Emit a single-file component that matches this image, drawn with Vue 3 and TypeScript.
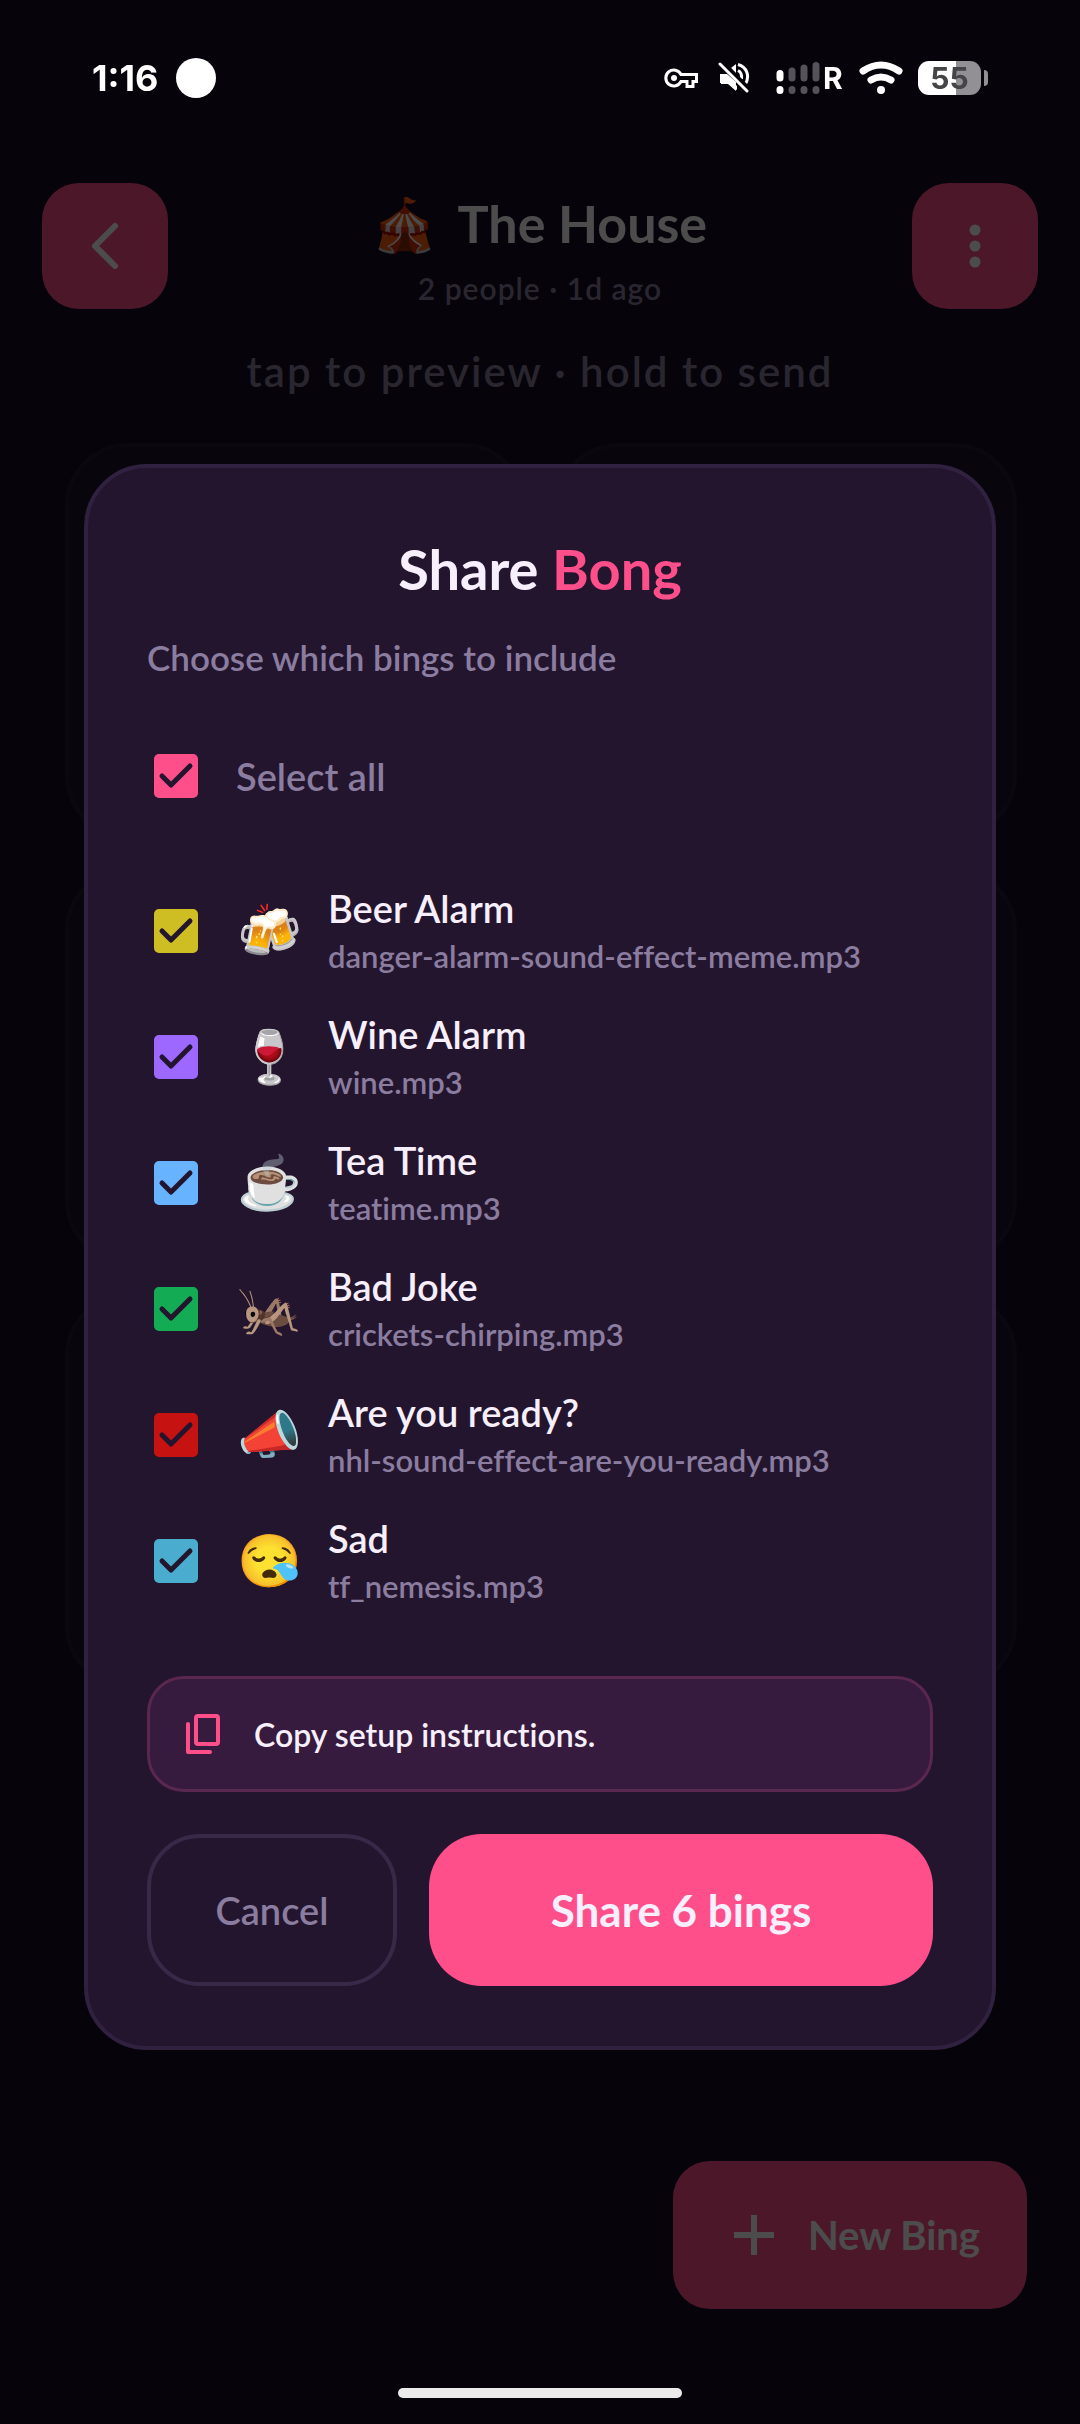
<script setup lang="ts">
import { computed, ref } from 'vue'

interface Bing {
  id: string
  emoji: string
  name: string
  file: string
  color: string
  selected: boolean
}

const bings = ref<Bing[]>([
  { id: 'beer', emoji: '🍻', name: 'Beer Alarm', file: 'danger-alarm-sound-effect-meme.mp3', color: '#cfbe23', selected: true },
  { id: 'wine', emoji: '🍷', name: 'Wine Alarm', file: 'wine.mp3', color: '#9d68ff', selected: true },
  { id: 'tea', emoji: '☕', name: 'Tea Time', file: 'teatime.mp3', color: '#68b3ff', selected: true },
  { id: 'joke', emoji: '🦗', name: 'Bad Joke', file: 'crickets-chirping.mp3', color: '#13ac54', selected: true },
  { id: 'ready', emoji: '📣', name: 'Are you ready?', file: 'nhl-sound-effect-are-you-ready.mp3', color: '#c71212', selected: true },
  { id: 'sad', emoji: '😪', name: 'Sad', file: 'tf_nemesis.mp3', color: '#4aadd0', selected: true },
])

const selectedCount = computed(() => bings.value.filter((b) => b.selected).length)
const allSelected = computed({
  get: () => selectedCount.value === bings.value.length,
  set: (value: boolean) => bings.value.forEach((b) => (b.selected = value)),
})
</script>

<template>
  <div class="screen">
    <div class="status">
      <span class="time">1:16</span>
      <span class="dot"></span>
      <div class="indicators">
        <svg class="key" width="34" height="22" viewBox="0 0 34 22" fill="none" stroke="#fff" stroke-width="3">
          <path d="M17 7.5A8 8 0 1 0 17 14.500H23V19.500H29V14.500H32.500V7.500Z" stroke-linejoin="miter" />
          <circle cx="10" cy="11" r="3" fill="#fff" stroke="none" />
        </svg>
        <svg class="mute" width="32" height="32" viewBox="0 0 32 32" fill="none">
          <path d="M2 12H7L19 24V28L9 21H2Z" fill="#fff" />
          <path d="M3 12H9L18 20V29L10 22H3Z" fill="#fff" />
          <path d="M13 6L18 2V12Z" fill="#fff" />
          <path d="M20 8.500C23 10 24 13 23.500 17" stroke="#fff" stroke-width="3" />
          <path d="M20 2.500C29 5 32 14 27.500 22" stroke="#fff" stroke-width="3" />
          <path d="M5 0L33 28" stroke="#07030b" stroke-width="3" />
          <path d="M2 2L29 29" stroke="#fff" stroke-width="3" stroke-linecap="round" />
        </svg>
        <svg class="signal" width="44" height="34" viewBox="0 0 44 34" fill="none" stroke-width="7" stroke-linecap="round">
          <path d="M4 12.500V17M4 28.500V29.500" stroke="#fff" />
          <path d="M16 10V17M16 28.500V29.500M28 7V17M28 28.500V29.500M40 4.500V17M40 28.500V29.500" stroke="#55525a" />
        </svg>
        <span class="roaming">R</span>
        <svg class="wifi" width="44" height="34" viewBox="0 0 44 34" fill="none" stroke="#fff" stroke-width="7" stroke-linecap="round">
          <path d="M4 10Q22 -2 40 10" />
          <path d="M12 19Q22 13 32 19" />
          <circle cx="22" cy="29" r="4" fill="#fff" stroke="none" />
        </svg>
        <span class="battery">55</span>
        <span class="battery-tip"></span>
      </div>
    </div>

    <header class="header">
      <button class="square" type="button" aria-label="Back">
        <svg width="36" height="52" viewBox="0 0 36 52" fill="none" stroke="#fff" stroke-width="6" stroke-linecap="round" stroke-linejoin="round">
          <path d="M28 6L8 26L28 46" />
        </svg>
      </button>
      <div class="heading">
        <h1><span class="tent">🎪</span>The House</h1>
        <p>2 people · 1d ago</p>
      </div>
      <button class="square" type="button" aria-label="More options">
        <svg width="12" height="44" viewBox="0 0 12 44" fill="#fff">
          <circle cx="6" cy="6" r="5.500" /><circle cx="6" cy="22" r="5.500" /><circle cx="6" cy="38" r="5.500" />
        </svg>
      </button>
    </header>
    <p class="hint">tap to preview · hold to send</p>
    <div class="tiles">
      <div v-for="bing in bings" :key="bing.id" class="tile"></div>
    </div>
    <button class="fab" type="button">
      <svg width="40" height="40" viewBox="0 0 40 40" stroke="#fff" stroke-width="6"><path d="M20 0V40M0 20H40" /></svg>
      <span>New Bing</span>
    </button>

    <div class="scrim">
      <section class="dialog" role="dialog" aria-labelledby="dialog-title">
        <h2 id="dialog-title">Share <em>Bong</em></h2>
        <p class="lead">Choose which bings to include</p>
        <label class="row all">
          <input v-model="allSelected" type="checkbox" />
          <span>Select all</span>
        </label>
        <ul>
          <li v-for="bing in bings" :key="bing.id">
            <label class="row">
              <input v-model="bing.selected" type="checkbox" :style="{ color: bing.color }" />
              <span class="emoji">{{ bing.emoji }}</span>
              <span class="labels">
                <span class="name">{{ bing.name }}</span>
                <span class="file">{{ bing.file }}</span>
              </span>
            </label>
          </li>
        </ul>
        <button class="copy" type="button">
          <svg width="36" height="40" viewBox="0 0 36 40" fill="none" stroke="#ff4f8b" stroke-width="4" stroke-linejoin="round" stroke-linecap="round">
            <rect x="11" y="2" width="22" height="28" rx="2" />
            <path d="M3 10V38H25" />
          </svg>
          <span>Copy setup instructions.</span>
        </button>
        <div class="actions">
          <button class="cancel" type="button">Cancel</button>
          <button class="share" type="button">Share {{ selectedCount }} bings</button>
        </div>
      </section>
    </div>
    <div class="home-bar"></div>
  </div>
</template>

<style>
body {
  margin: 0;
  background: #170b23;
}
</style>

<style scoped>
.screen {
  min-height: 100vh;
  color: #fff;
  font-family: Lato, "Noto Color Emoji", sans-serif;
  font-weight: 600;
  font-variant-ligatures: no-common-ligatures;
}
* {
  box-sizing: border-box;
}
h1,
h2,
p,
ul {
  margin: 0;
  padding: 0;
}
button {
  padding: 0;
  border: 0;
  color: inherit;
  font: inherit;
}

.status {
  position: relative;
  z-index: 2;
  display: flex;
  align-items: center;
  height: 156px;
  padding: 0 92px;
}
.time {
  font: 700 36px/40px Inter, sans-serif;
}
.dot {
  width: 40px;
  height: 40px;
  margin-left: 18px;
  border-radius: 50%;
  background: #fff;
}
.indicators {
  display: flex;
  align-items: center;
  margin-left: auto;
}
.mute {
  margin-left: 20px;
}
.signal {
  margin-left: 26px;
}
.roaming {
  width: 20px;
  margin-left: 3px;
  font: 700 30px/34px Inter, sans-serif;
}
.wifi {
  margin-left: 16px;
}
.battery {
  width: 63px;
  height: 34px;
  margin-left: 15px;
  border-radius: 11px;
  background: linear-gradient(90deg, #fff 60%, #929095 60%);
  color: #454446;
  font: 700 30px/34px Inter, sans-serif;
  text-align: center;
}
.battery-tip {
  width: 4px;
  height: 16px;
  margin-left: 3px;
  border-radius: 0 4px 4px 0;
  background: #929095;
}

.header {
  display: flex;
  align-items: flex-start;
  justify-content: space-between;
  padding: 27px 42px 0;
}
.square {
  display: flex;
  align-items: center;
  justify-content: center;
  width: 126px;
  height: 126px;
  border-radius: 37px;
  background: #ff4f8b;
}
.heading {
  text-align: center;
}
h1 {
  display: flex;
  align-items: center;
  justify-content: center;
  gap: 20px;
  font-size: 52px;
  font-weight: 700;
  line-height: 80px;
}
.tent {
  font-size: 52px;
  line-height: 76px;
}
.heading p {
  color: #8b7fa2;
  font-size: 30px;
  line-height: 50px;
  letter-spacing: 1px;
}
.hint {
  margin-top: 28px;
  color: #8b7fa2;
  font-size: 42px;
  line-height: 60px;
  letter-spacing: 2px;
  text-align: center;
}
.tiles {
  display: grid;
  grid-template-columns: 1fr 1fr;
  grid-auto-rows: 395px;
  gap: 30px;
  padding: 42px 63px 0 65px;
}
.tile {
  border: 4px solid #241a30;
  border-radius: 63px;
  background: #1c1228;
}
.fab {
  position: fixed;
  right: 53px;
  bottom: 115px;
  display: flex;
  align-items: center;
  gap: 34px;
  height: 148px;
  padding: 0 47px 0 61px;
  border-radius: 37px;
  background: #ff4f8b;
  font-size: 40px;
  font-weight: 700;
}

.scrim {
  position: fixed;
  inset: 0;
  z-index: 1;
  display: flex;
  align-items: center;
  padding: 152px 84px 62px;
  background: rgba(0, 0, 0, 0.7);
}
.dialog {
  flex: 1;
  padding: 60px 59px;
  border: 4px solid #2f213f;
  border-radius: 63px;
  background: #24152f;
}
h2 {
  color: #f7effc;
  font-size: 56px;
  font-weight: 700;
  line-height: 82px;
  text-align: center;
}
em {
  color: #ff4f8b;
  font-style: normal;
}
.lead {
  margin-top: 24px;
  color: #8b7d9f;
  font-size: 35px;
  line-height: 46px;
}
.row {
  display: flex;
  align-items: center;
  height: 126px;
  padding-left: 7px;
}
.all {
  margin: 33px 0 29px;
  color: #8b7d9f;
  font-size: 38px;
}
input {
  flex: none;
  appearance: none;
  width: 44px;
  height: 44px;
  margin: 0 38px 0 0;
  border: 4px solid currentColor;
  border-radius: 5px;
  color: #ff4f8b;
}
input:checked {
  background: currentColor url("data:image/svg+xml,%3Csvg xmlns='http://www.w3.org/2000/svg' viewBox='0 0 44 44'%3E%3Cpath d='M8 22L17 31L36 12' fill='none' stroke='%2324152f' stroke-width='5' stroke-linecap='round' stroke-linejoin='round'/%3E%3C/svg%3E") border-box center / 44px 44px no-repeat;
}
ul {
  list-style: none;
}
.emoji {
  width: 68px;
  padding-bottom: 4px;
  font-size: 52px;
  line-height: 64px;
  text-align: center;
}
.labels {
  display: flex;
  flex-direction: column;
  margin-left: 24px;
}
.name {
  color: #f7effc;
  font-size: 38px;
  line-height: 50px;
}
.file {
  color: #8b7d9f;
  font-size: 31px;
  line-height: 46px;
}
.copy {
  display: flex;
  align-items: center;
  gap: 33px;
  width: 100%;
  height: 116px;
  margin-top: 52px;
  padding-left: 35px;
  border: 3px solid #5a2750;
  border-radius: 37px;
  background: #361b3e;
  color: #f7effc;
  font-size: 32px;
}
.actions {
  display: flex;
  gap: 32px;
  height: 152px;
  margin-top: 42px;
}
.actions button {
  border-radius: 53px;
}
.cancel {
  width: 250px;
  border: 4px solid #382948;
  background: transparent;
  color: #8b7d9f;
  font-size: 38px;
}
.share {
  flex: 1;
  background: #ff4f8b;
  color: #f7effc;
  font-size: 44px;
  font-weight: 700;
}
.home-bar {
  position: fixed;
  bottom: 26px;
  left: 50%;
  z-index: 2;
  width: 284px;
  height: 10px;
  margin-left: -142px;
  border-radius: 5px;
  background: #ebebeb;
}
</style>
